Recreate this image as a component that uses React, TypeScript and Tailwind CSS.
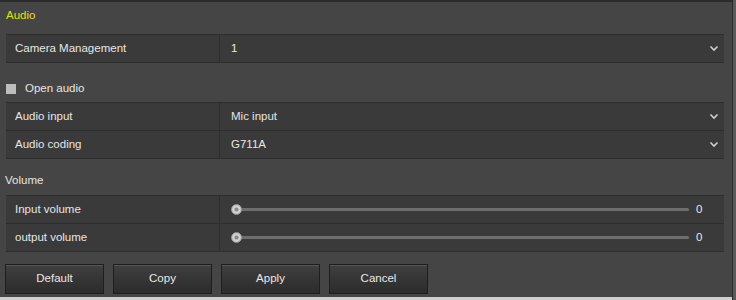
import React from 'react';

const Chevron = () => (
  <svg width="10" height="7" viewBox="0 0 10 7" className="text-[#cfcfcf]">
    <polyline points="1.5,1.5 5,5 8.5,1.5" fill="none" stroke="currentColor" strokeWidth="1.6" />
  </svg>
);

const SelectRow = ({ label, value, last }: { label: string; value: string; last?: boolean }) => (
  <div className={`flex ${last ? 'h-[27px]' : 'h-[28px] border-b border-[#2e2e2e]'}`}>
    <div className="w-[214px] flex items-center pl-[9px] border-r border-[#2e2e2e] bg-[#3a3a3a]">{label}</div>
    <div className="flex-1 flex items-center justify-between pl-[11px] pr-[5px] bg-[#3a3a3a]">
      <span>{value}</span>
      <Chevron />
    </div>
  </div>
);

const SliderRow = ({ label, last }: { label: string; last?: boolean }) => (
  <div className={`flex ${last ? 'h-[27px]' : 'h-[28px] border-b border-[#2e2e2e]'}`}>
    <div className="w-[214px] flex items-center pl-[9px] border-r border-[#2e2e2e] bg-[#3a3a3a]">{label}</div>
    <div className="flex-1 flex items-center pl-[11px] pr-[22px] bg-[#3a3a3a]">
      <div className="relative flex-1 h-[11px] flex items-center">
        <div className="w-full h-[3px] bg-[#6e6e6e] rounded-full" />
        <div className="absolute left-0 top-0 w-[11px] h-[11px] rounded-full bg-[radial-gradient(circle,#8a8a8a_0%,#8a8a8a_25%,#d8d8d8_40%,#b5b5b5_100%)] border border-[#9a9a9a]" />
      </div>
      <span className="ml-[7px] w-[6px]">0</span>
    </div>
  </div>
);

const Btn = ({ children }: { children: React.ReactNode }) => (
  <button className="w-[99px] h-[30px] border border-[#1e1e1e] bg-gradient-to-b from-[#3f3f3f] to-[#2c2c2c] shadow-[inset_0_1px_0_#555] text-[#e8e8e8]">
    {children}
  </button>
);

export default function App() {
  return (
    <div
      className="w-[736px] h-[300px] flex bg-[#454545] text-[11.5px] text-[#e6e6e6] overflow-hidden"
      style={{ fontFamily: '"Liberation Sans", Arial, sans-serif' }}
    >
      <div className="flex-1 flex flex-col border-t-2 border-[#2c2c2c] border-b-[3px] border-b-[#cfcfcf]">
        <div className="h-[28px] flex items-center pl-[6px] text-[#e3e000]">Audio</div>

        <div className="mt-[4px] ml-[6px] w-[718px] border-y border-[#2e2e2e]">
          <SelectRow label="Camera Management" value="1" last />
        </div>

        <div className="mt-[16px] h-[20px] flex items-center pl-[6px]">
          <span className="w-[10px] h-[10px] bg-[#bdbdbd] mr-[9px]" />
          Open audio
        </div>

        <div className="mt-[3px] ml-[6px] w-[718px] border-y border-[#2e2e2e]">
          <SelectRow label="Audio input" value="Mic input" />
          <SelectRow label="Audio coding" value="G711A" last />
        </div>

        <div className="mt-[12px] h-[20px] flex items-center pl-[5px]">Volume</div>

        <div className="mt-[4px] ml-[6px] w-[718px] border-y border-[#2e2e2e]">
          <SliderRow label="Input volume" />
          <SliderRow label="output volume" last />
        </div>

        <div className="mt-[12px] ml-[5px] flex gap-[9px]">
          <Btn>Default</Btn>
          <Btn>Copy</Btn>
          <Btn>Apply</Btn>
          <Btn>Cancel</Btn>
        </div>
      </div>
      <div className="w-[1px] bg-[#2a2a2a]" />
      <div className="w-[3px] bg-[#5a5a5a]" />
    </div>
  );
}
